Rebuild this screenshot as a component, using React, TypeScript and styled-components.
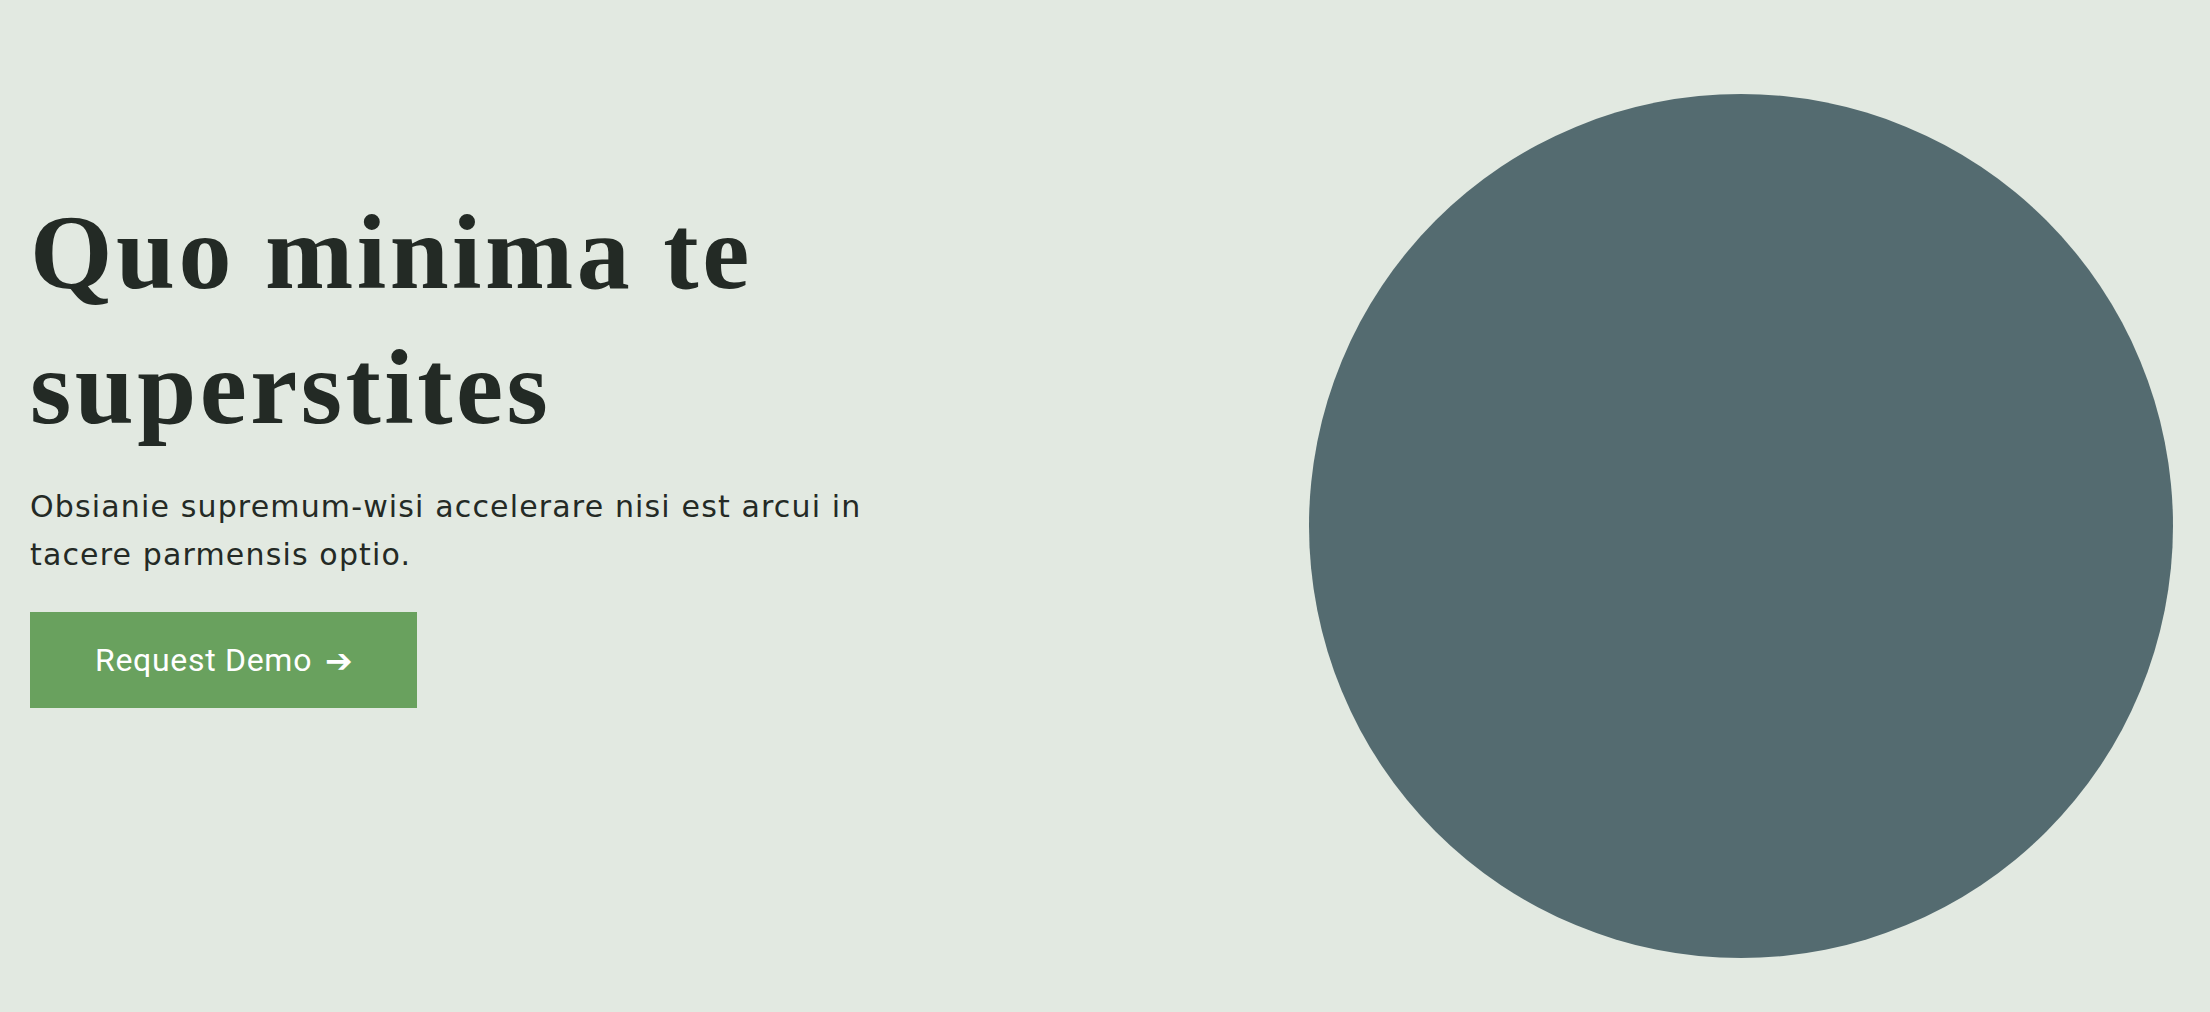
import React from "react"
import styled, { createGlobalStyle } from "styled-components"

const GlobalStyle = createGlobalStyle`
  html, body {
    margin: 0;
    padding: 0;
    background: #e2e9e1;
  }
  * {
    box-sizing: border-box;
  }
`

const Hero = styled.section`
  display: flex;
  justify-content: space-between;
  align-items: flex-start;
  min-height: 1012px;
  padding: 0 37px 0 30px;
  background: #e2e9e1;
  overflow: hidden;
`

const Copy = styled.div`
  display: flex;
  flex-direction: column;
  align-items: flex-start;
  width: 880px;
  padding-top: 185px;
`

const Title = styled.h1`
  margin: 0;
  font-family: "Liberation Serif", "Times New Roman", serif;
  font-weight: 700;
  font-size: 106px;
  line-height: 135px;
  letter-spacing: 3.5px;
  color: #232a25;
`

const Lead = styled.p`
  margin: 28px 0 0;
  font-family: "DejaVu Sans", "Open Sans", sans-serif;
  font-weight: 400;
  font-size: 30px;
  line-height: 48px;
  letter-spacing: 1.15px;
  color: #242a25;
`

const DemoButton = styled.a`
  display: inline-flex;
  align-items: center;
  justify-content: center;
  gap: 13px;
  height: 96px;
  margin-top: 33px;
  padding: 0 64px 0 65px;
  background: #69a15e;
  color: #ffffff;
  font-family: Roboto, "Liberation Sans", sans-serif;
  font-size: 32px;
  letter-spacing: 0.7px;
  text-decoration: none;
  cursor: pointer;
`

const Arrow = styled.span`
  font-family: "DejaVu Sans", sans-serif;
  font-size: 33px;
  line-height: 1;
`

const Disc = styled.div`
  flex: none;
  width: 864px;
  height: 864px;
  margin-top: 94px;
  border-radius: 50%;
  background: #546b70;
`

export default function App() {
  return (
    <>
      <GlobalStyle />
      <Hero>
        <Copy>
          <Title>
            Quo minima te
            <br />
            superstites
          </Title>
          <Lead>
            Obsianie supremum-wisi accelerare nisi est arcui in tacere
            parmensis optio.
          </Lead>
          <DemoButton>
            Request Demo<Arrow>➔</Arrow>
          </DemoButton>
        </Copy>
        <Disc />
      </Hero>
    </>
  )
}
